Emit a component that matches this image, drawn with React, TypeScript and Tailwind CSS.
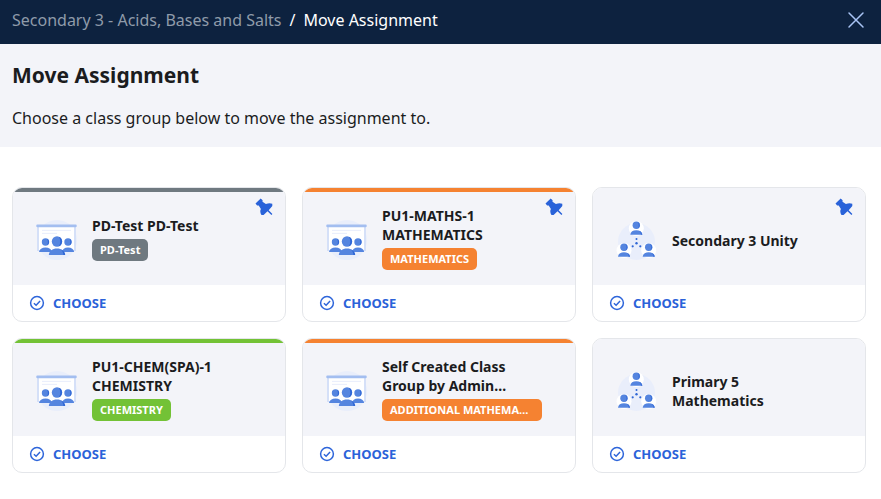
type Group = {
  name: string;
  kind: "class" | "custom";
  stripe: string;
  subject?: string;
  fullWidthSubject?: boolean;
  pinned?: boolean;
};

const GREY = "bg-[#6f7980]";
const ORANGE = "bg-[#f58231]";
const GREEN = "bg-[#73c236]";

const groups: Group[] = [
  { name: "PD-Test PD-Test", kind: "class", stripe: GREY, subject: "PD-Test", pinned: true },
  { name: "PU1-MATHS-1 MATHEMATICS", kind: "class", stripe: ORANGE, subject: "MATHEMATICS", pinned: true },
  { name: "Secondary 3 Unity", kind: "custom", stripe: "bg-transparent", pinned: true },
  { name: "PU1-CHEM(SPA)-1 CHEMISTRY", kind: "class", stripe: GREEN, subject: "CHEMISTRY" },
  {
    name: "Self Created Class Group by Admin…",
    kind: "class",
    stripe: ORANGE,
    subject: "ADDITIONAL MATHEMA…",
    fullWidthSubject: true,
  },
  { name: "Primary 5 Mathematics", kind: "custom", stripe: "bg-transparent" },
];

function ClassIcon() {
  return (
    <svg className="size-10 shrink-0 overflow-visible" viewBox="0 0 40 40" aria-hidden="true">
      <circle cx="21" cy="20" r="20" fill="#e9eefb" />
      <path d="M1 6h39v25H1z" fill="#d5e0f8" />
      <path d="M3 7h35v23H3z" fill="#fff" />
      <rect x="0.3" y="4.6" width="40.4" height="2.6" rx="1" fill="#a3bef0" />
      <path d="M6 10.4h29M6 13.4h15" stroke="#e2e9fa" strokeWidth="0.8" />
      <circle cx="9.5" cy="22" r="3.7" fill="#5585df" />
      <circle cx="32" cy="22" r="3.7" fill="#5585df" />
      <path d="M11 18.7a3.7 3.7 0 0 1 0 6.6c1.2-2 1.2-4.6 0-6.6zM33.5 18.7a3.7 3.7 0 0 1 0 6.6c1.2-2 1.2-4.6 0-6.6z" fill="#2e66d6" />
      <path d="M3 32c.5-3 3-4.5 6.5-4.5S15.5 29 16 32zM26 32c.5-3 2.5-4.5 6-4.5s5.7 1.5 6.2 4.5z" fill="#5585df" />
      <circle cx="21" cy="21.5" r="5.2" fill="#5585df" />
      <path d="M22.8 16.7a5.2 5.2 0 0 1 0 9.6c2-2.8 2-6.8 0-9.6z" fill="#2e66d6" />
      <path d="M12.8 35c.4-3.8 3.6-6.4 8.2-6.4s7.8 2.6 8.2 6.4z" fill="#5585df" />
      <path d="M25 29.4c2.4 1 3.9 3 4.2 5.6h-1.800c-.1-2.200-.9-4.200-2.400-5.600z" fill="#2e66d6" />
    </svg>
  );
}

function Person({ x, y }: { x: number; y: number }) {
  return (
    <g transform={`translate(${x} ${y})`}>
      <circle r="7.5" fill="#fff" />
      <circle cy="-3.2" r="3.7" fill="#5585df" />
      <path d="M1.3-6.6a3.7 3.7 0 0 1 0 6.8c1.4-2 1.4-4.8 0-6.8z" fill="#3c70da" />
      <path d="M-6 6.2c.3-2.9 2.6-4.4 6-4.4s5.7 1.5 6 4.4z" fill="#5585df" />
      <path d="M3 2.4C5 3.1 5.9 4.3 6 6.2H4.6C4.5 4.6 4 3.3 3 2.4z" fill="#3c70da" />
    </g>
  );
}

function NetworkIcon() {
  return (
    <svg className="size-10 shrink-0 overflow-visible" viewBox="0 0 40 40" aria-hidden="true">
      <circle cx="20.5" cy="21.5" r="18.5" fill="#e9eefb" />
      <Person x={20.3} y={8.5} />
      <Person x={8} y={30.5} />
      <Person x={32.7} y={30.5} />
      <g fill="#2e66d6">
        <circle cx="20.5" cy="19" r="1" />
        <circle cx="20.5" cy="23.3" r="1.2" />
        <circle cx="16.7" cy="26.3" r="1.1" />
        <circle cx="24.3" cy="26.3" r="1.1" />
      </g>
    </svg>
  );
}

function PinIcon() {
  return (
    <svg className="absolute top-2.5 right-3 size-[18px]" viewBox="0 0 18 18" aria-label="Pinned" role="img">
      <path
        d="M.5 5.4L5.7.4 7.6 2.200l-.1 1.500L10.900 5.900Q14.500 4.700 17.300 5.700v2.200L13.700 12.200l3.700 3.900-1 1-3.900-3.800L8.600 17H6.500Q4.400 13.500 5.900 10.900L3.700 7.500 2.100 7.600z"
        fill="#2962d9"
      />
    </svg>
  );
}

function CheckIcon() {
  return (
    <svg className="size-4" viewBox="0 0 16 16" fill="none" stroke="#2f66da" strokeWidth="1.5" aria-hidden="true">
      <circle cx="8" cy="8" r="6.4" />
      <path d="M4.9 8.3l2.2 1.9 4-4.2" />
    </svg>
  );
}

function GroupCard({ group }: { group: Group }) {
  return (
    <article className="relative flex flex-col overflow-hidden rounded-[10px] border border-[#e4e6ea] bg-white">
      <div className="flex grow flex-col bg-[#f3f4f9]">
        <div className={`h-1 ${group.stripe}`} />
        <div className="flex min-h-[93px] grow items-center gap-4 pt-[3px] pr-8 pl-[23px]">
          {group.kind === "class" ? <ClassIcon /> : <NetworkIcon />}
          <div className="w-40 min-w-0">
            <h2 className="text-sm leading-[19px] font-bold">{group.name}</h2>
            {group.subject && (
              <span
                className={`my-1 block max-w-full truncate rounded-[5px] px-2 text-[11px] leading-[22px] font-bold text-white ${group.fullWidthSubject ? "w-full" : "w-fit"} ${group.stripe}`}
              >
                {group.subject}
              </span>
            )}
          </div>
        </div>
      </div>
      {group.pinned && <PinIcon />}
      <button type="button" className="flex h-9 items-center gap-2 px-4 text-[13px] font-bold text-[#2b62d9]">
        <CheckIcon />
        <span className="pt-px">CHOOSE</span>
      </button>
    </article>
  );
}

export default function App() {
  return (
    <div className="bg-white font-['Noto_Sans',sans-serif] text-[#1b1c1e]">
      <header className="flex h-11 items-center justify-between bg-[#0d223f] pr-4 pb-1 pl-3 text-white">
        <nav aria-label="Breadcrumb" className="flex gap-2 text-base">
          <a href="#assignment" className="text-[#8f9baa]">Secondary 3 - Acids, Bases and Salts</a>
          <span>/</span>
          <span>Move Assignment</span>
        </nav>
        <button type="button" aria-label="Close">
          <svg className="size-[18px]" viewBox="0 0 18 18" stroke="#a9c4f5" strokeWidth="1.5" strokeLinecap="round" aria-hidden="true">
            <path d="M2 2l14 14M16 2L2 16" />
          </svg>
        </button>
      </header>
      <section className="bg-[#f3f4f9] px-3 pt-[15px] pb-[17px]">
        <h1 className="text-[21px] leading-8 font-bold">Move Assignment</h1>
        <p className="mt-[15px] text-base leading-6">Choose a class group below to move the assignment to.</p>
      </section>
      <main className="grid grid-cols-3 gap-4 pt-10 pr-[15px] pb-6 pl-3">
        {groups.map((group) => (
          <GroupCard key={group.name} group={group} />
        ))}
      </main>
    </div>
  );
}
